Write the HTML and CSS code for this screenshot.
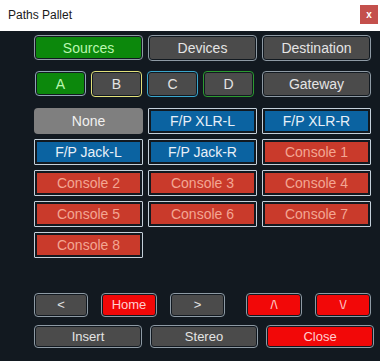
FILE: index.html
```html
<!DOCTYPE html>
<html lang="en">
  <head>
    <meta charset="UTF-8" />
    <title>Paths Pallet</title>
    <link rel="stylesheet" href="styles.css">
  </head>
  <body>
    <div class="window">
      <header class="titlebar">
        <span class="title">Paths Pallet</span>
        <button class="close-x">x</button>
      </header>
      <main class="panel">
        <div class="tabs">
          <button class="btn green">Sources</button>
          <button class="btn">Devices</button>
          <button class="btn">Destination</button>
          <div class="groups">
            <button class="btn green edge-a">A</button>
            <button class="btn edge-b">B</button>
            <button class="btn edge-c">C</button>
            <button class="btn edge-d">D</button>
          </div>
          <button class="btn">Gateway</button>
        </div>

        <div class="paths">
          <button class="none">None</button>
          <button class="cell blue">F/P XLR-L</button>
          <button class="cell blue">F/P XLR-R</button>
          <button class="cell blue">F/P Jack-L</button>
          <button class="cell blue">F/P Jack-R</button>
          <button class="cell red">Console 1</button>
          <button class="cell red">Console 2</button>
          <button class="cell red">Console 3</button>
          <button class="cell red">Console 4</button>
          <button class="cell red">Console 5</button>
          <button class="cell red">Console 6</button>
          <button class="cell red">Console 7</button>
          <button class="cell red">Console 8</button>
        </div>

        <div class="nav">
          <button class="btn small w-nav">&lt;</button>
          <button class="btn small hot w-home">Home</button>
          <button class="btn small w-nav">&gt;</button>
          <button class="btn small hot w-up">/\</button>
          <button class="btn small hot w-down">\/</button>
        </div>
        <div class="actions">
          <button class="btn small">Insert</button>
          <button class="btn small">Stereo</button>
          <button class="btn small hot">Close</button>
        </div>
      </main>
    </div>
  </body>
</html>
```

FILE: styles.css
```css
* {
  box-sizing: border-box;
}

body {
  margin: 0;
  width: 380px;
  height: 361px;
  overflow: hidden;
  font-family: "Liberation Sans", Arial, sans-serif;
}

.window {
  display: flex;
  flex-direction: column;
  height: 361px;
}

.titlebar {
  height: 31px;
  background: #ffffff;
  display: flex;
  align-items: center;
  justify-content: space-between;
  padding: 0 2px 2px 8px;
}

.title {
  font-size: 12px;
  color: #1a1a1a;
}

.close-x {
  width: 18px;
  height: 19px;
  border: none;
  padding: 0;
  background: #c4504c;
  color: #ffffff;
  font: bold 10px "Liberation Sans", Arial, sans-serif;
}

.panel {
  flex: 1;
  background: #121920;
  padding: 4px 6px 0 34px;
}

button {
  font-family: "Liberation Sans", Arial, sans-serif;
  cursor: pointer;
}

/* framed buttons: light rim, dark ring, filled face */
.btn {
  height: 26px;
  border: 1px solid #8e9aa4;
  border-radius: 4px;
  padding: 1px;
  background: #4b4b4b;
  background-clip: content-box;
  color: #e4e4e4;
  font-size: 14px;
  line-height: 20px;
}

.btn.green {
  background-color: #0c880c;
  color: #b9f7b0;
}

.btn.hot {
  background-color: #f20808;
  color: #ffcfcf;
}

.edge-a { border-color: #8ea4b4; }
.edge-b { border-color: #e2e07a; }
.edge-c { border-color: #3aa6cc; }
.edge-d { border-color: #2c9a30; }

.tabs {
  display: grid;
  grid-template-columns: repeat(3, 109px);
  column-gap: 5px;
  row-gap: 10px;
}

.tabs .btn:first-child {
  height: 25px;
}

.groups {
  grid-column: span 2;
  display: grid;
  grid-template-columns: repeat(4, 51px);
  column-gap: 5px;
  padding-left: 1px;
}

.paths {
  margin-top: 11px;
  display: grid;
  grid-template-columns: repeat(3, 109px);
  grid-auto-rows: 26px;
  column-gap: 5px;
  row-gap: 5px;
}

.none {
  border: none;
  border-radius: 4px;
  background: #7f7f7f;
  color: #f0f0f0;
  font-size: 14px;
}

.cell {
  border: 1px solid #c4d0da;
  border-radius: 0;
  padding: 2px;
  background-clip: content-box;
  font-size: 14px;
  line-height: 20px;
  position: relative;
}

.cell.blue {
  background-color: #0b63a1;
  color: #e8f0f8;
}

.cell.red {
  background-color: #c93a2b;
  color: #f3a693;
}

.cell {
  border-radius: 1px;
}

.cell.blue,
.cell.red {
  background-image: none;
}

.nav {
  margin-top: 35px;
  display: flex;
  gap: 13px;
}

.btn.small {
  font-size: 13px;
  height: 24px;
  line-height: 18px;
}

.w-nav { width: 55px; }
.w-home { width: 56px; }
.w-up { width: 56px; margin-left: 8px; }
.w-down { width: 56px; }

.nav .w-nav:first-child { width: 54px; }

.actions {
  margin-top: 8px;
  display: grid;
  grid-template-columns: repeat(3, 108px);
  column-gap: 8px;
}

.actions .btn.small {
  height: 23px;
  line-height: 17px;
}
```
